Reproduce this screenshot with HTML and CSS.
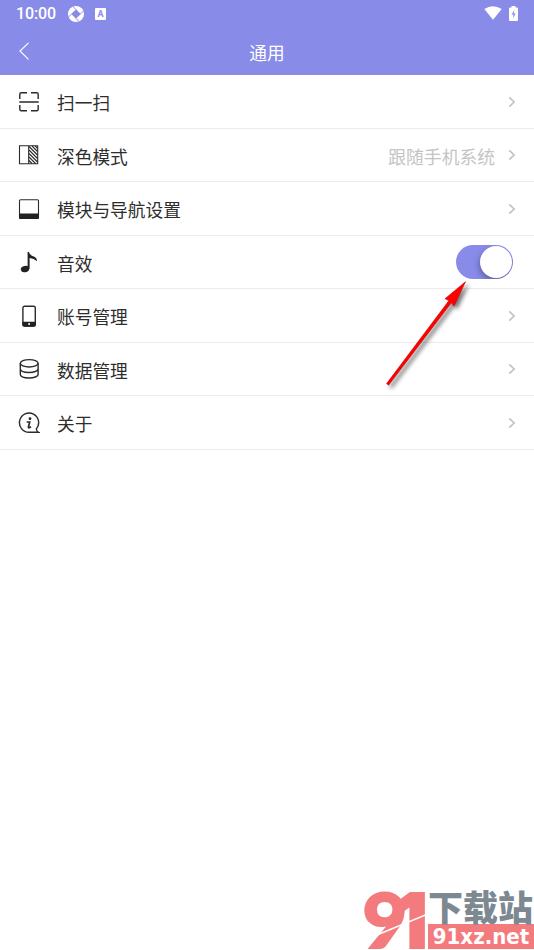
FILE: index.html
```html
<!DOCTYPE html>
<html lang="zh-CN">
<head>
<meta charset="utf-8">
<title>通用</title>
<link rel="stylesheet" href="styles.css">
</head>
<body>
<div class="screen">
  <header class="top">
    <div class="status">
      <span class="clock">10:00</span>
      <svg class="aperture" width="16" height="16" viewBox="0 0 16 16"><circle cx="8" cy="8" r="8" fill="#fff"/><path d="M8 3.200 12.800 8 8 12.800 3.200 8Z" fill="#898be9"/><path d="M8 3.600 4.800.4M12.400 8l3.200-3.200M8 12.400l3.200 3.200M3.600 8 .4 11.200" stroke="#898be9" stroke-width="1"/></svg>
      <span class="badge">A</span>
      <svg class="wifi" width="18" height="14" viewBox="0 0 18 14"><path d="M.3 3Q9-2.6 17.7 3L9 13.7Z" fill="#fff"/></svg>
      <svg class="battery" width="9" height="15" viewBox="0 0 9 15"><path d="M2.500 0h4v1.500H8q1 0 1 1V14q0 1-1 1H1q-1 0-1-1V2.500q0-1 1-1h1.500Z" fill="#fff"/><path d="M5.500 4 2.500 8.500h2L3.800 12.500 6.700 7.500h-2Z" fill="#898be9"/></svg>
    </div>
    <div class="nav">
      <svg class="back" width="11" height="18" viewBox="0 0 11 18"><path d="M9.500.8 1 9l8.500 8.300" fill="none" stroke="#fff" stroke-width="1.150"/></svg>
      <h1>通用</h1>
    </div>
  </header>
  <main class="list">
    <div class="row">
      <svg class="icon" viewBox="0 0 22 22"><path d="M1.800 8V3.300q0-1.500 1.500-1.500H9M13 1.800h5.700q1.500 0 1.500 1.500V8M1.800 14v4.200q0 1.500 1.500 1.500H9M13 19.700h5.700q1.500 0 1.500-1.500V14M1.300 11h19.400"/></svg>
      <span class="label">扫一扫</span>
      <svg class="chev" viewBox="0 0 8 12"><path d="m1.300 1.300 4.800 4.700-4.800 4.700"/></svg>
    </div>
    <div class="row">
      <svg class="icon" viewBox="0 0 22 22"><path class="thin" d="M1.500 1.700h18.200v18H1.500ZM10.700 1.700v18"/><path class="thin" d="m11 2.500 8.500 8.500M11 6l8.500 8.500M11 9.500l8.500 8.500M11 13l6.500 6.500M11 16.500l3 3M14 2l5.500 5.500M17.200 2l2.300 2.300"/></svg>
      <span class="label">深色模式</span>
      <span class="value">跟随手机系统</span>
      <svg class="chev" viewBox="0 0 8 12"><path d="m1.300 1.300 4.800 4.700-4.800 4.700"/></svg>
    </div>
    <div class="row">
      <svg class="icon" viewBox="0 0 22 22"><rect class="thin" x="1.500" y="1.700" width="19" height="18.500" rx="1"/><path class="solid" d="M1 15.500h20v4.500q0 1-1 1H2q-1 0-1-1Z"/></svg>
      <span class="label">模块与导航设置</span>
      <svg class="chev" viewBox="0 0 8 12"><path d="m1.300 1.300 4.800 4.700-4.800 4.700"/></svg>
    </div>
    <div class="row">
      <svg class="icon" viewBox="0 0 22 22"><ellipse class="solid" cx="7" cy="18.100" rx="4.200" ry="3.100" transform="rotate(-12 7 18.100)"/><path class="solid" d="M9.600 1h1.300q.4 3 4.200 4.200 3.900 1.200 3.900 5-3-2.600-7.400-3.200V18H9.600Z"/></svg>
      <span class="label">音效</span>
      <span class="switch"><span class="knob"></span></span>
    </div>
    <div class="row">
      <svg class="icon" viewBox="0 0 22 22"><rect x="4.900" y="1.200" width="12.400" height="19.800" rx="1.700"/><path class="solid" d="M4.300 16.700h13.600v3q0 2-2 2H6.300q-2 0-2-2Z"/><circle cx="11.100" cy="19" r="1" class="hole"/></svg>
      <span class="label">账号管理</span>
      <svg class="chev" viewBox="0 0 8 12"><path d="m1.300 1.300 4.800 4.700-4.800 4.700"/></svg>
    </div>
    <div class="row">
      <svg class="icon" viewBox="0 0 22 22"><ellipse cx="11.200" cy="5.300" rx="8.900" ry="3.700"/><path d="M2.300 5.300v10.900c0 5 17.800 5 17.800 0V5.300M2.300 10.700c0 5 17.800 5 17.800 0"/></svg>
      <span class="label">数据管理</span>
      <svg class="chev" viewBox="0 0 8 12"><path d="m1.300 1.300 4.800 4.700-4.800 4.700"/></svg>
    </div>
    <div class="row">
      <svg class="icon" viewBox="0 0 22 22"><path d="M20.500 20.300H11A9.600 9.600 0 1 1 18.300 17q.3 2.200 2.200 3.300Z"/><circle class="solid" cx="12" cy="6.700" r="1.400"/><path d="M8.700 10h3l-1.300 5q-.2 1 .8.800l1.800-1" stroke-width="1.700"/></svg>
      <span class="label">关于</span>
      <svg class="chev" viewBox="0 0 8 12"><path d="m1.300 1.300 4.800 4.700-4.800 4.700"/></svg>
    </div>
  </main>
  <svg class="arrow" width="100" height="125" viewBox="0 0 100 125"><path d="M8.600 105.200 71.500 22.500 74 26 85.500 1.700 65 18.700 69 20.500 6.600 103.600Z" fill="#f00" stroke="#c80000" stroke-width=".6"/></svg>
  <div class="brand">
    <svg class="mark" width="64" height="60" viewBox="0 0 64 60">
      <g fill="#f37b7e" stroke="#f37b7e" stroke-width="2">
        <text class="nine" transform="translate(-1.500 57.500)">9</text>
        <text class="one" transform="translate(32 57.500) scale(.92 1)">1</text>
      </g>
      <path d="M8 47 64 24" stroke="#fff" stroke-width="1.600"/>
    </svg>
    <div class="words">
      <div class="name">下载站</div>
      <div class="site"><span>91xz.net</span></div>
    </div>
  </div>
</div>
</body>
</html>
```
FILE: styles.css
```css
* { box-sizing: border-box; }
body { margin: 0; background: #fff; font-family: "Noto Sans CJK SC", sans-serif; }
.screen { position: relative; width: 534px; height: 950px; overflow: hidden; background: #fff; }
.top { height: 75.400px; background: #898be9; color: #fff; }
.status { display: flex; align-items: center; height: 27px; padding: 0 15px 0 16px; }
.clock { width: 52px; font: 500 16px/27px Roboto, sans-serif; letter-spacing: -.1px; }
.badge { width: 11px; height: 12px; margin-left: 11px; border-radius: 1px; background: #fff; color: #898be9; font: 700 9px/12px Roboto, sans-serif; text-align: center; }
.wifi { margin: -1px 0 0 auto; }
.battery { margin: -1px 1px 0 7px; }
.nav { display: grid; grid-template-columns: 40px 1fr 40px; align-items: center; height: 48px; }
.back { margin-left: 19px; }
h1 { margin: 2px 0 0; font-size: 17.700px; line-height: 26px; font-weight: 400; text-align: center; }
.row { display: flex; align-items: center; height: 53.500px; padding: 0 18px; border-bottom: 1px solid #ebebeb; }
.icon { width: 22px; height: 22px; margin-top: .500px; fill: none; stroke: #2b2b2b; stroke-width: 1.400; }
.icon .thin { stroke-width: 1.100; }
.icon .solid { fill: #222; stroke: none; }
.icon .hole { fill: #fff; stroke: none; }
.label { margin: 1px auto 0 17px; color: #2d2d2d; font-size: 17.700px; line-height: 26px; }
.value { margin: 1px 13px 0 0; color: #c4c4c4; font-size: 17.800px; line-height: 26px; }
.chev { width: 8px; height: 12px; margin-top: .500px; fill: none; stroke: #c3c3c3; stroke-width: 1.700; }
.switch { display: flex; justify-content: flex-end; width: 57px; height: 34px; margin-right: 3px; padding: 1px; border-radius: 17px; background: #898be9; overflow: hidden; }
.knob { width: 32px; height: 32px; border-radius: 50%; background: #fff; box-shadow: -1px 3px 6px rgba(0, 0, 0, .3); }
.arrow { position: absolute; left: 380px; top: 280px; filter: drop-shadow(3px 3px 2px rgba(0, 0, 0, .55)); }
.brand { position: absolute; left: 364px; top: 890px; display: flex; width: 170px; height: 60px; }
.mark { flex: none; }
.nine { font: 900 77px Lato, sans-serif; }
.one { font: 900 75px Inter, sans-serif; }
.words { width: 106px; }
.name { height: 34px; color: #7c8990; font-size: 35px; line-height: 32px; font-weight: 900; white-space: nowrap; }
.site { width: 106px; height: 25px; background: #f37b7e; color: #fff; font: 700 22px/25px "DejaVu Sans Condensed", "DejaVu Sans", sans-serif; text-align: center; white-space: nowrap; }
```
